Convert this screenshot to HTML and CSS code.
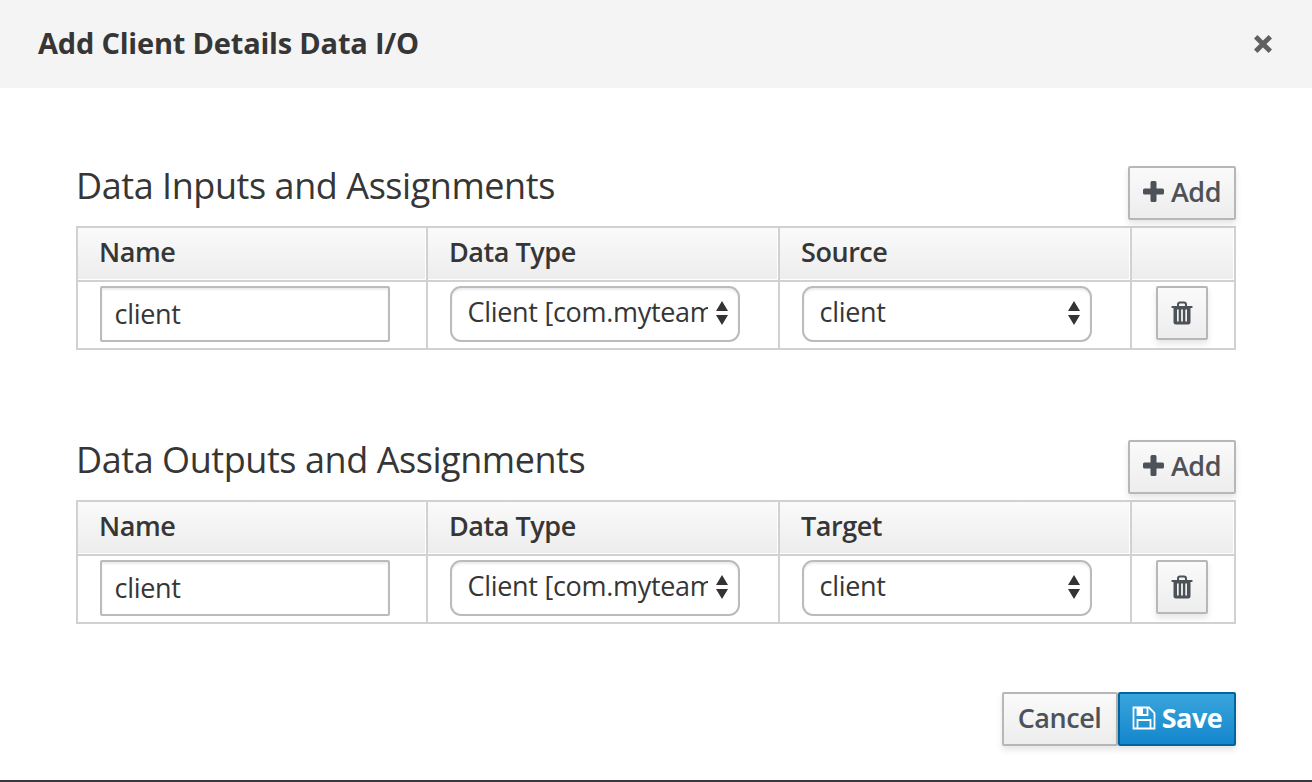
FILE: index.html
```html
<!DOCTYPE html>
<html lang="en">
<head>
<meta charset="utf-8">
<title>Add Client Details Data I/O</title>
<link rel="stylesheet" href="styles.css">
</head>
<body>
<svg class="defs" width="0" height="0" aria-hidden="true">
  <symbol id="plus" viewBox="0 0 21 21"><path d="M9 0h3q1.500 0 1.500 1.500v6h6Q21 7.500 21 9v3q0 1.500-1.500 1.500h-6v6Q13.500 21 12 21H9q-1.500 0-1.500-1.500v-6h-6Q0 13.500 0 12V9q0-1.500 1.500-1.500h6v-6Q7.500 0 9 0z"/></symbol>
  <symbol id="trash" viewBox="0 0 22 24"><path fill-rule="evenodd" d="M6 5V3.500Q6 .500 9 .500h4Q16 .500 16 3.500V5h5q.500 0 .500.500v1q0 .500-.500.500h-1.500v14q0 2.500-2.500 2.500H5Q2.500 23.500 2.500 21V7H1Q.500 7 .500 6.500v-1Q.500 5 1 5zM8 5h6V3.700Q14 2.500 12.800 2.500H9.200Q8 2.500 8 3.700zM6 8.500v12h1.700v-12zM10.100 8.500v12h1.800v-12zM14.300 8.500v12H16v-12z"/></symbol>
  <symbol id="updown" viewBox="0 0 12 24"><path d="M6 0l6 10H0zM0 14h12L6 24z"/></symbol>
</svg>
<div class="dialog">
  <header class="dialog-header">
    <h1 class="dialog-title">Add Client Details Data I/O</h1>
    <svg class="close" viewBox="0 0 18 18"><path d="M1.700 1.700l14.600 14.600M16.300 1.700l-14.600 14.600"/></svg>
  </header>
  <main class="dialog-body">
    <section class="group">
      <div class="group-head">
        <h2 class="group-title">Data Inputs and Assignments</h2>
        <button class="btn add"><svg class="plus"><use href="#plus"/></svg>Add</button>
      </div>
      <div class="table">
        <div class="th">Name</div><div class="th">Data Type</div><div class="th">Source</div><div class="th"></div>
        <div class="td"><div class="input">client</div></div>
        <div class="td"><div class="select"><span class="value">Client [com.myteam</span><svg class="updown"><use href="#updown"/></svg></div></div>
        <div class="td"><div class="select"><span class="value">client</span><svg class="updown"><use href="#updown"/></svg></div></div>
        <div class="td actions"><button class="btn remove" aria-label="Delete"><svg class="trash"><use href="#trash"/></svg></button></div>
      </div>
    </section>
    <section class="group">
      <div class="group-head">
        <h2 class="group-title">Data Outputs and Assignments</h2>
        <button class="btn add"><svg class="plus"><use href="#plus"/></svg>Add</button>
      </div>
      <div class="table">
        <div class="th">Name</div><div class="th">Data Type</div><div class="th">Target</div><div class="th"></div>
        <div class="td"><div class="input">client</div></div>
        <div class="td"><div class="select"><span class="value">Client [com.myteam</span><svg class="updown"><use href="#updown"/></svg></div></div>
        <div class="td"><div class="select"><span class="value">client</span><svg class="updown"><use href="#updown"/></svg></div></div>
        <div class="td actions"><button class="btn remove" aria-label="Delete"><svg class="trash"><use href="#trash"/></svg></button></div>
      </div>
    </section>
    <footer class="dialog-footer">
      <button class="btn cancel">Cancel</button>
      <button class="btn save"><svg class="disk" viewBox="0 0 24 24"><path class="line" d="M1.500 1.500h15.500l5.500 5.500v15.500h-21zM5.500 22.500v-8.500h13v8.500"/><path class="line" d="M5.500 1.500v7.500h10v-7.500"/><path class="solid" d="M5.500 1.500h5.500v7.500H5.500z"/></svg>Save</button>
    </footer>
  </main>
</div>
</body>
</html>
```
FILE: styles.css
```css
* { box-sizing: border-box; }
body {
  margin: 0;
  background: #fff;
  color: #363636;
  font-family: "Open Sans", sans-serif;
  font-size: 27px;
  letter-spacing: -.3px;
  overflow: hidden;
}
.defs { display: block; height: 0; }
.dialog { height: 782px; border-bottom: 2px solid #38393d; }
.dialog-header {
  display: flex;
  justify-content: space-between;
  align-items: center;
  height: 88px;
  padding: 0 40px 0 38px;
  background: #f4f4f4;
}
.dialog-title { margin: 0; padding-bottom: 2px; font-size: 29px; font-weight: 700; line-height: 40px; letter-spacing: -.2px; }
.close { width: 18px; height: 18px; fill: none; stroke: #606060; stroke-width: 4.8; overflow: visible; }
.dialog-body { padding: 78px 76px 0; }
.group { height: 184px; margin-bottom: 90px; }
.group-head { display: flex; justify-content: space-between; height: 60px; }
.group-title { margin: 0; font-size: 36px; font-weight: 400; line-height: 39px; letter-spacing: -.44px; }
.btn {
  display: flex;
  align-items: center;
  justify-content: center;
  height: 54px;
  padding: 0 0 2px;
  border: 2px solid #b7b7b7;
  border-radius: 2px;
  background: linear-gradient(#fafafa, #ededed);
  box-shadow: 0 4px 6px rgba(3, 3, 3, .1);
  color: #4d5258;
  font: 600 27px/36px "Open Sans", sans-serif;
  letter-spacing: -.45px;
}
.add { width: 108px; gap: 7px; }
.plus { width: 21px; height: 21px; margin-bottom: 1px; fill: #4d5258; }
.table {
  display: grid;
  grid-template-columns: 348px 350px 350px 102px;
  grid-template-rows: 52px 66px;
  gap: 2px;
  padding: 2px;
  background: #d1d1d1;
}
.th {
  padding: 6px 21px;
  border: solid #fff;
  border-width: 0 1px 1px 0;
  background: linear-gradient(#fafafa, #ededed);
  font-weight: 600;
  line-height: 36px;
  letter-spacing: -.45px;
}
.td { padding: 4px 22px 0; background: #fff; }
.input, .select {
  width: 290px;
  height: 56px;
  border: 2px solid #bbb;
  background: #fff;
  box-shadow: inset 0 2px 2px rgba(3, 3, 3, .075);
}
.input { border-radius: 2px; padding: 8px 12.5px; line-height: 36px; }
.select {
  display: flex;
  align-items: center;
  justify-content: space-between;
  border-radius: 11px;
  padding: 0 10.5px 0 15.5px;
}
.value { width: 240.5px; overflow: hidden; white-space: nowrap; line-height: 36px; padding-bottom: 4px; }
.updown { width: 12px; height: 24px; margin-bottom: 2px; fill: #333; }
.actions { padding-left: 24px; }
.remove { width: 52px; padding: 0 0 1px; }
.trash { width: 22px; height: 24px; fill: #4d5258; }
.dialog-footer { display: flex; justify-content: flex-end; margin-top: -22px; }
.cancel { width: 116px; padding-right: 1px; }
.save {
  width: 118px;
  gap: 6px;
  border-color: #00659c;
  background: linear-gradient(#39a5dc, #1386cd);
  color: #fff;
  font-weight: 700;
}
.disk { width: 24px; height: 24px; }
.line { fill: none; stroke: #fff; stroke-width: 1.8; }
.solid { fill: #fff; }
```
